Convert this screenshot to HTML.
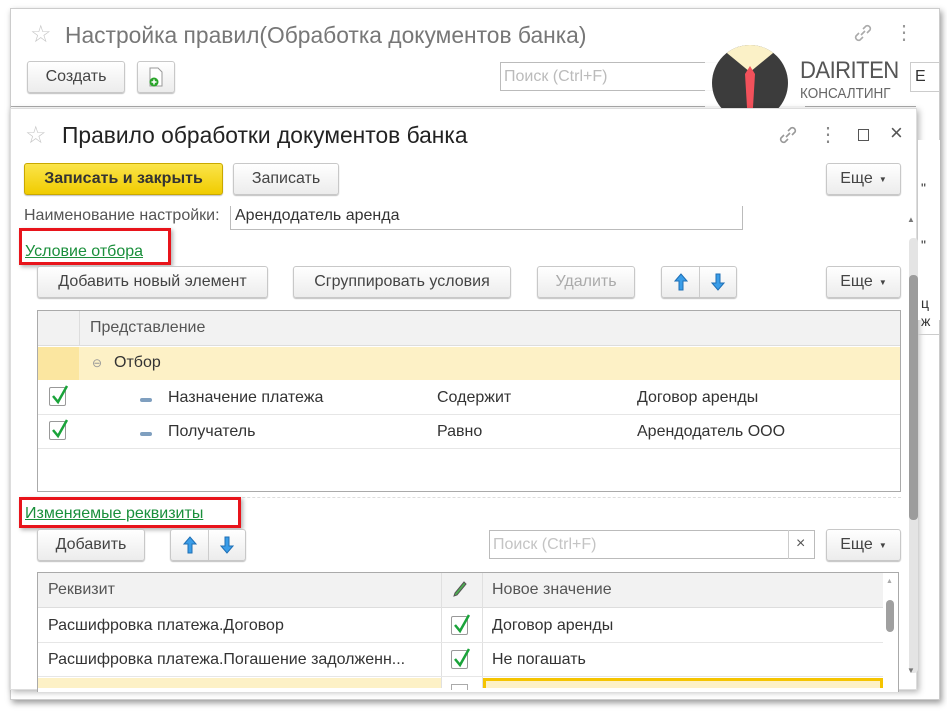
<!DOCTYPE html>
<html><head><meta charset="utf-8"><style>
*{box-sizing:border-box;margin:0;padding:0}
body{width:947px;height:713px;background:#fff;position:relative;overflow:hidden;font-family:"Liberation Sans",sans-serif;color:#333;font-size:16px}
.a{position:absolute}
.btn{position:absolute;height:32px;border:1px solid #c8c8c8;border-radius:3px;background:linear-gradient(#fff,#ececec);box-shadow:0 1px 1px rgba(0,0,0,.25);display:flex;align-items:center;justify-content:center;font-size:16px;color:#444}
.hl{position:absolute;border:3px solid #e8141b;box-shadow:2px 2px 4px rgba(0,0,0,.3)}
.lnk{position:absolute;color:#1a8f3b;text-decoration:underline;font-size:16px}
.chk{position:absolute;width:17px;height:19px;border:1px solid #999;background:#fff;border-radius:2px}
.chk svg{position:absolute;left:0;top:-4px}
</style></head><body>
<div class="a" style="left:10px;top:8px;width:930px;height:692px;border:1px solid #ccc;box-shadow:2px 3px 6px rgba(0,0,0,.4);background:#fff"></div>
<div class="a" style="left:30px;top:20px;font-size:24px;color:#c8c8c8">☆</div>
<div class="a" style="left:65px;top:22px;font-size:22.8px;color:#777">Настройка правил(Обработка документов банка)</div>
<svg class="a" style="left:852px;top:22px" width="22" height="22"><path d="M9 13l4-4M7 11l-3 3a3 3 0 004 4l3-3M15 11l3-3a3 3 0 00-4-4l-3 3" stroke="#aaa" stroke-width="1.6" fill="none"/></svg>
<div class="a" style="left:894px;top:20px;font-size:20px;color:#999">⋮</div>
<div class="btn" style="left:27px;top:61px;width:98px">Создать</div>
<div class="btn" style="left:137px;top:61px;width:38px"><svg width="16" height="20"><path d="M2 1h8l4 4v14H2z" fill="#fff" stroke="#999"/><circle cx="6" cy="15" r="4.5" fill="#2aa52a"/><path d="M6 12.5v5M3.5 15h5" stroke="#fff" stroke-width="1.5"/></svg></div>
<div class="a" style="left:500px;top:62px;width:220px;height:29px;border:1px solid #bbb;color:#bbb;padding:5px 3px;font-size:16px">Поиск (Ctrl+F)</div>
<div class="a" style="left:11px;top:106px;width:905px;height:1px;background:#aaa"></div>
<div class="a" style="left:705px;top:40px;width:100px;height:80px;background:#fff;opacity:.9"></div>
<svg class="a" style="left:710px;top:44px" width="80" height="78"><defs><clipPath id="c"><circle cx="40" cy="39" r="38"/></clipPath></defs><g clip-path="url(#c)"><rect width="80" height="80" fill="#3c3c3c"/><path d="M6 0h68L40 28z" fill="#fbf1c7"/><path d="M40 22l-5 8 3 50h4l3-50z" fill="#f2515b"/></g></svg>
<div class="a" style="left:800px;top:57px;font-size:24px;color:#555;letter-spacing:-.6px;transform:scaleX(.92);transform-origin:left">DAIRITEN</div>
<div class="a" style="left:800px;top:85px;font-size:15px;color:#666;transform:scaleX(.9);transform-origin:left">КОНСАЛТИНГ</div>
<div class="a" style="left:910px;top:62px;width:30px;height:30px;border:1px solid #ccc;font-size:16px;padding:5px 4px;background:#fff">Е</div>
<div class="a" style="left:10px;top:108px;width:907px;height:582px;background:#fff;border:1px solid #ddd;box-shadow:2px 2px 6px rgba(0,0,0,.3)"></div>
<div class="a" style="left:25px;top:121px;font-size:24px;color:#c8c8c8">☆</div>
<div class="a" style="left:62px;top:122px;font-size:22.8px;color:#222">Правило обработки документов банка</div>
<svg class="a" style="left:777px;top:124px" width="22" height="22"><path d="M9 13l4-4M7 11l-3 3a3 3 0 004 4l3-3M15 11l3-3a3 3 0 00-4-4l-3 3" stroke="#999" stroke-width="1.6" fill="none"/></svg>
<div class="a" style="left:818px;top:122px;font-size:20px;color:#888">⋮</div>
<div class="a" style="left:858px;top:129px;width:11px;height:12px;border:1.5px solid #555"></div>
<div class="a" style="left:890px;top:120px;font-size:22px;color:#555">×</div>
<div class="btn" style="left:24px;top:163px;width:199px;background:linear-gradient(#fbe44a,#f0cc00);border-color:#c9a800;font-weight:bold;color:#333">Записать и закрыть</div>
<div class="btn" style="left:233px;top:163px;width:106px">Записать</div>
<div class="btn" style="left:826px;top:163px;width:75px">Еще <span style="font-size:8px;margin-left:6px">▼</span></div>
<div class="a" style="left:24px;top:207px;color:#555">Наименование настройки:</div>
<div class="a" style="left:230px;top:206px;width:513px;height:24px;border:1px solid #bbb;border-top:none;padding:1px 4px 0;color:#333">Арендодатель аренда</div>
<div class="a" style="left:907px;top:215px;font-size:8px;color:#777">▲</div>
<div class="a" style="left:909px;top:238px;width:9px;height:435px;background:#e4e4e4;border-radius:4px"></div>
<div class="a" style="left:909px;top:275px;width:9px;height:245px;background:#9c9c9c;border-radius:4px"></div>
<div class="a" style="left:907px;top:666px;font-size:8px;color:#777">▼</div>
<div class="hl" style="left:19px;top:228px;width:152px;height:37px"></div>
<div class="lnk" style="left:25px;top:243px">Условие отбора</div>
<div class="btn" style="left:37px;top:266px;width:231px">Добавить новый элемент</div>
<div class="btn" style="left:293px;top:266px;width:218px">Сгруппировать условия</div>
<div class="btn" style="left:537px;top:266px;width:98px;color:#aaa">Удалить</div>
<div class="btn" style="left:661px;top:266px;width:76px;justify-content:space-around"><svg width="14" height="18"><path d="M7 1L1 8h4v9h4V8h4z" fill="#3a9de8" stroke="#1f6fb5"/></svg><svg width="14" height="18"><path d="M7 17L1 10h4V1h4v9h4z" fill="#3a9de8" stroke="#1f6fb5"/></svg></div>
<div class="a" style="left:699px;top:267px;width:1px;height:30px;background:#ccc"></div>
<div class="btn" style="left:826px;top:266px;width:75px">Еще <span style="font-size:8px;margin-left:6px">▼</span></div>
<div class="a" style="left:37px;top:310px;width:864px;height:182px;border:1px solid #aaa;background:#fff"></div>
<div class="a" style="left:38px;top:311px;width:862px;height:35px;background:#f2f2f2;border-bottom:1px solid #ddd"></div>
<div class="a" style="left:79px;top:311px;width:1px;height:35px;background:#ddd"></div>
<div class="a" style="left:90px;top:319px;color:#555">Представление</div>
<div class="a" style="left:38px;top:347px;width:862px;height:33px;background:#fdf1c6"></div>
<div class="a" style="left:38px;top:347px;width:41px;height:33px;background:#fbe6a0"></div>
<div class="a" style="left:92px;top:356px;font-size:12px;color:#999">⊖</div>
<div class="a" style="left:114px;top:354px">Отбор</div>
<div class="a" style="left:38px;top:414px;width:862px;height:1px;background:#e6e6e6"></div>
<div class="a" style="left:38px;top:448px;width:862px;height:1px;background:#e6e6e6"></div>
<div class="chk" style="left:49px;top:387px"><svg width="18" height="22"><path d="M3 12l5 6 9-16" stroke="#1aa33a" stroke-width="2.5" fill="none"/></svg></div>
<div class="chk" style="left:49px;top:421px"><svg width="18" height="22"><path d="M3 12l5 6 9-16" stroke="#1aa33a" stroke-width="2.5" fill="none"/></svg></div>
<div class="a" style="left:140px;top:398px;width:12px;height:4px;background:#7f9fbf;border-radius:2px"></div>
<div class="a" style="left:140px;top:432px;width:12px;height:4px;background:#7f9fbf;border-radius:2px"></div>
<div class="a" style="left:168px;top:389px">Назначение платежа</div>
<div class="a" style="left:437px;top:389px">Содержит</div>
<div class="a" style="left:637px;top:389px">Договор аренды</div>
<div class="a" style="left:168px;top:423px">Получатель</div>
<div class="a" style="left:437px;top:423px">Равно</div>
<div class="a" style="left:637px;top:423px">Арендодатель ООО</div>
<div class="a" style="left:37px;top:497px;width:864px;border-top:1px dashed #ddd"></div>
<div class="hl" style="left:19px;top:497px;width:222px;height:31px"></div>
<div class="lnk" style="left:25px;top:505px">Изменяемые реквизиты</div>
<div class="btn" style="left:37px;top:529px;width:108px">Добавить</div>
<div class="btn" style="left:170px;top:529px;width:76px;justify-content:space-around"><svg width="14" height="18"><path d="M7 1L1 8h4v9h4V8h4z" fill="#3a9de8" stroke="#1f6fb5"/></svg><svg width="14" height="18"><path d="M7 17L1 10h4V1h4v9h4z" fill="#3a9de8" stroke="#1f6fb5"/></svg></div>
<div class="a" style="left:208px;top:530px;width:1px;height:30px;background:#ccc"></div>
<div class="a" style="left:489px;top:530px;width:326px;height:29px;border:1px solid #bbb;color:#c4c4c4;padding:5px 3px">Поиск (Ctrl+F)</div>
<div class="a" style="left:788px;top:530px;width:1px;height:29px;background:#ccc"></div>
<div class="a" style="left:796px;top:535px;color:#555">×</div>
<div class="btn" style="left:826px;top:529px;width:75px">Еще <span style="font-size:8px;margin-left:6px">▼</span></div>
<div class="a" style="left:37px;top:572px;width:862px;height:120px;border:1px solid #aaa;border-bottom:none;background:#fff"></div>
<div class="a" style="left:38px;top:573px;width:845px;height:35px;background:#f2f2f2;border-bottom:1px solid #ddd"></div>
<div class="a" style="left:441px;top:573px;width:1px;height:115px;background:#e0e0e0"></div>
<div class="a" style="left:482px;top:573px;width:1px;height:115px;background:#e0e0e0"></div>
<div class="a" style="left:48px;top:581px;color:#555">Реквизит</div>
<svg class="a" style="left:451px;top:580px" width="16" height="20"><path d="M13 2l2 2-9 11-3 1 1-3z" fill="#4caf50" stroke="#555"/></svg>
<div class="a" style="left:492px;top:581px;color:#555">Новое значение</div>
<div class="a" style="left:38px;top:642px;width:845px;height:1px;background:#e6e6e6"></div>
<div class="a" style="left:38px;top:676px;width:845px;height:1px;background:#e6e6e6"></div>
<div class="a" style="left:48px;top:617px">Расшифровка платежа.Договор</div>
<div class="a" style="left:48px;top:651px">Расшифровка платежа.Погашение задолженн...</div>
<div class="a" style="left:492px;top:617px">Договор аренды</div>
<div class="a" style="left:492px;top:651px">Не погашать</div>
<div class="chk" style="left:451px;top:616px"><svg width="18" height="22"><path d="M3 12l5 6 9-16" stroke="#1aa33a" stroke-width="2.5" fill="none"/></svg></div>
<div class="chk" style="left:451px;top:650px"><svg width="18" height="22"><path d="M3 12l5 6 9-16" stroke="#1aa33a" stroke-width="2.5" fill="none"/></svg></div>
<div class="a" style="left:38px;top:678px;width:403px;height:10px;background:#fdf1c6"></div>
<div class="a" style="left:483px;top:678px;width:400px;height:10px;border:3px solid #f5c400;border-bottom:none;background:#fdf1c6"></div>
<div class="a" style="left:451px;top:684px;width:17px;height:6px;border:1px solid #aaa;border-bottom:none"></div>
<div class="a" style="left:886px;top:578px;font-size:7px;color:#aaa">▲</div>
<div class="a" style="left:886px;top:600px;width:8px;height:32px;background:#a0a0a0;border-radius:4px"></div>
<div class="a" style="left:918px;top:140px;width:22px;height:180px;background:#fff"></div>
<div class="a" style="left:921px;top:180px;font-size:14px;color:#333">"</div>
<div class="a" style="left:921px;top:237px;font-size:14px;color:#333">"</div>
<div class="a" style="left:921px;top:295px;font-size:14px;color:#333">ц</div>
<div class="a" style="left:921px;top:313px;font-size:14px;color:#333">ж</div>
<div class="a" style="left:918px;top:334px;width:22px;height:1px;background:#ccc"></div>
</body></html>
